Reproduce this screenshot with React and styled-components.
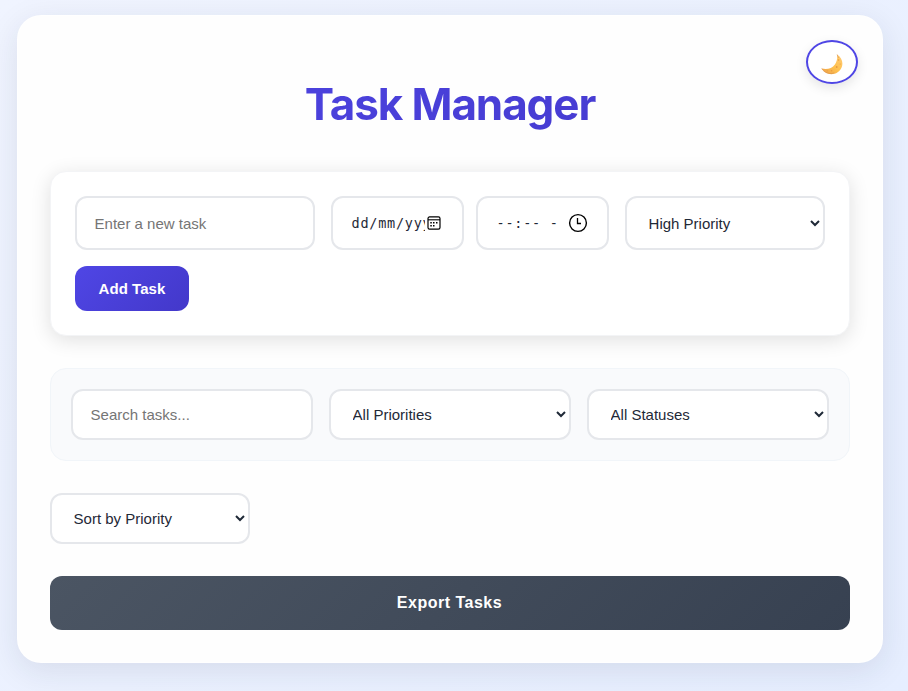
import React from "react";
import styled, { createGlobalStyle, css } from "styled-components";

const GlobalStyle = createGlobalStyle`
  * { box-sizing: border-box; }
  html { height: 100%; overflow: hidden; }
  body {
    margin: 0;
    min-height: 100vh;
    padding: 15px 25px 28px 17px;
    background: linear-gradient(135deg, #f0f4ff 0%, #e6eeff 100%);
    font-family: Inter, sans-serif;
    color: #1f2937;
  }
`;

const Card = styled.main`
  position: relative;
  width: 866px;
  height: 648px;
  padding: 32px;
  border: 1px solid rgba(255, 255, 255, 0.8);
  border-radius: 24px;
  background: #fefefe;
  box-shadow: 0 8px 32px rgba(31, 41, 55, 0.1);
`;

const ThemeToggle = styled.button`
  position: absolute;
  top: 24px;
  right: 24px;
  display: flex;
  align-items: center;
  justify-content: center;
  width: 52px;
  height: 44px;
  padding: 3px 0 0;
  border: 2px solid #4f46e5;
  border-radius: 50%;
  background: #fff;
  box-shadow: 0 4px 12px rgba(0, 0, 0, 0.1);
`;

const Title = styled.h1`
  height: 55px;
  margin: 29px 0 40px;
  text-align: center;
  font-size: 44px;
  line-height: 55px;
  font-weight: 700;
  letter-spacing: -1.1px;
  color: transparent;
  background: linear-gradient(135deg, #4f46e5, #4338ca);
  background-clip: text;
`;

const TaskForm = styled.section`
  display: flex;
  flex-wrap: wrap;
  gap: 16px;
  height: 165px;
  margin-top: -1px;
  padding: 24px;
  border: 1px solid #f3f4f6;
  border-radius: 16px;
  background: #fff;
  box-shadow: 0 4px 20px rgba(0, 0, 0, 0.12);
`;

const fieldStyle = css`
  width: ${(p) => p.$width}px;
  height: ${(p) => p.$height || 51}px;
  margin: 0;
  padding: 0 17.6px;
  border: 2px solid #e5e7eb;
  border-radius: 12px;
  background: #fff;
  color: #1f2937;
  font-family: "Liberation Sans", Arial, sans-serif;
  font-size: 15px;
  outline: none;
`;

const TextInput = styled.input`
  ${fieldStyle}
  &::placeholder { color: #757575; }
`;

const Select = styled.select`
  ${fieldStyle}
`;

const DateTimeGroup = styled.div`
  display: flex;
  gap: 12px;
`;

const PickerField = styled.div`
  ${fieldStyle}
  display: flex;
  align-items: center;
  justify-content: space-between;
  padding-right: ${(p) => p.$end}px;
  font-family: "DejaVu Sans Mono", monospace;
  font-size: 13.5px;
  letter-spacing: 0.75px;
`;

const PickerText = styled.span`
  width: ${(p) => p.$width}px;
  padding-left: 1px;
  overflow: hidden;
  white-space: pre;
  flex: none;
`;

const AddButton = styled.button`
  width: 114px;
  height: 45px;
  padding: 0;
  border: 0;
  border-radius: 12px;
  background: linear-gradient(135deg, #4f46e5, #4338ca);
  color: #fff;
  font: 700 15px "Liberation Sans", Arial, sans-serif;
  letter-spacing: 0.05px;
`;

const Filters = styled.section`
  display: flex;
  gap: 16px;
  height: 93px;
  margin-top: 32px;
  padding: 20px;
  border: 1px solid #f1f5f9;
  border-radius: 16px;
  background: #f9fafc;
`;

const SortRow = styled.div`
  display: flex;
  margin: 32px 0;
`;

const ExportButton = styled.button`
  display: block;
  width: 100%;
  height: 54px;
  padding: 0 1px 0 0;
  border: 0;
  border-radius: 12px;
  background: linear-gradient(135deg, #4b5563, #374151);
  color: #fff;
  font: 700 16px "Liberation Sans", Arial, sans-serif;
  letter-spacing: 0.5px;
`;

const MoonIcon = () => (
  <svg width="22" height="22" viewBox="0 0 22 22" aria-hidden="true">
    <defs>
      <linearGradient id="moon" x1="0" y1="1" x2="1" y2="0">
        <stop offset="0" stopColor="#eda04a" />
        <stop offset="0.5" stopColor="#ffc24f" />
        <stop offset="1" stopColor="#ffcb78" />
      </linearGradient>
    </defs>
    <path d="M16.1 1.5C20.5 4.2 22.5 9.2 20.8 13.9C18.9 19.3 13 22.2 7.5 20.8C4.5 20 2 18.1.7 15.5C6.2 16.7 11.1 15.4 13.9 11.4C15.9 8.5 16.6 5 16.1 1.5Z" fill="url(#moon)" />
    <path d="M.7 15.5C3.2 19.9 8.8 21.6 13.3 19.8M16.1 1.5L17.5 5" fill="none" stroke="#d99049" strokeWidth="0.6" />
    <g fill="#e89a43">
      <circle cx="17.6" cy="7" r="0.8" />
      <circle cx="15.7" cy="14" r="0.9" />
      <circle cx="10.6" cy="17.8" r="0.8" />
      <circle cx="6.2" cy="17.8" r="0.6" />
      <circle cx="19.2" cy="11" r="0.6" />
    </g>
  </svg>
);

const CalendarIcon = () => (
  <svg width="14" height="14" viewBox="0 0 14 14" aria-hidden="true">
    <rect x="1" y="0.9" width="12" height="12.2" rx="1.6" fill="none" stroke="#000" strokeWidth="1.2" />
    <path d="M1 3.8H13" stroke="#000" strokeWidth="1.1" />
    <g fill="#000">
      <rect x="6" y="6" width="1.5" height="1.5" />
      <rect x="9" y="6" width="1.5" height="1.5" />
      <rect x="3.3" y="6" width="1.5" height="1.5" />
      <rect x="3.3" y="9" width="1.5" height="1.5" />
      <rect x="6" y="9" width="1.5" height="1.5" />
    </g>
  </svg>
);

const ClockIcon = () => (
  <svg width="20" height="20" viewBox="0 0 20 20" aria-hidden="true">
    <circle cx="10" cy="10" r="8.4" fill="none" stroke="#000" strokeWidth="1.4" />
    <path d="M9.5 5V10.5H13" fill="none" stroke="#000" strokeWidth="1.3" />
  </svg>
);

export default function App() {
  return (
    <>
      <GlobalStyle />
      <Card>
        <ThemeToggle aria-label="Toggle theme"><MoonIcon /></ThemeToggle>
        <Title>Task Manager</Title>
        <TaskForm>
          <TextInput $width={240} $height={54} placeholder="Enter a new task" />
          <DateTimeGroup>
            <PickerField $width={133} $height={54} $end={20.6}>
              <PickerText $width={74.8}>dd/mm/yyy</PickerText>
              <CalendarIcon />
            </PickerField>
            <PickerField $width={133} $height={54} $end={19}>
              <PickerText $width={64}>--:-- -</PickerText>
              <ClockIcon />
            </PickerField>
          </DateTimeGroup>
          <Select $width={200} $height={54} defaultValue="high">
            <option value="high">High Priority</option>
            <option value="medium">Medium Priority</option>
            <option value="low">Low Priority</option>
          </Select>
          <AddButton>Add Task</AddButton>
        </TaskForm>
        <Filters>
          <TextInput $width={242} placeholder="Search tasks..." />
          <Select $width={242}><option>All Priorities</option></Select>
          <Select $width={242}><option>All Statuses</option></Select>
        </Filters>
        <SortRow>
          <Select $width={200}><option>Sort by Priority</option></Select>
        </SortRow>
        <ExportButton>Export Tasks</ExportButton>
      </Card>
    </>
  );
}
